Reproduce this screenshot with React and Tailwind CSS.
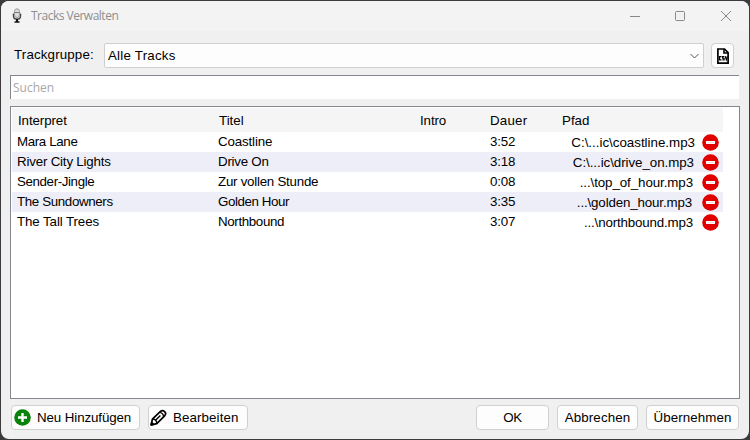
const tracks = [
  { artist: "Mara Lane", artistFit: "tracking-[-0.36px]", title: "Coastline", titleFit: "tracking-[-0.15px]", time: "3:52", path: "C:\\...ic\\coastline.mp3", pathFit: "pr-[7px]" },
  { artist: "River City Lights", artistFit: "tracking-[-0.19px]", title: "Drive On", titleFit: "tracking-[-0.25px]", time: "3:18", path: "C:\\...ic\\drive_on.mp3", pathFit: "pr-[8px] tracking-[-0.05px]" },
  { artist: "Sender-Jingle", artistFit: "tracking-[-0.38px]", title: "Zur vollen Stunde", titleFit: "tracking-[-0.25px]", time: "0:08", path: "...\\top_of_hour.mp3", pathFit: "pr-[9px] tracking-[-0.08px]" },
  { artist: "The Sundowners", artistFit: "tracking-[-0.36px]", title: "Golden Hour", titleFit: "tracking-[-0.42px]", time: "3:35", path: "...\\golden_hour.mp3", pathFit: "pr-[10px] tracking-[-0.14px]" },
  { artist: "The Tall Trees", artistFit: "tracking-[-0.1px]", title: "Northbound", titleFit: "tracking-[-0.36px]", time: "3:07", path: "...\\northbound.mp3", pathFit: "pr-[9px] tracking-[-0.16px]" },
];

const buttonStyle = "flex h-[25px] items-center rounded-[4px] border border-[#d0d0d0] bg-[#fdfdfd]";

function MicIcon() {
  return (
    <svg width="10" height="16" viewBox="0 0 10 16" fill="none">
      <path d="M1.5 5.5v2.4c0 4.3 7 4.3 7 0V5.5" stroke="#444" strokeWidth="1.4" />
      <rect x="2.5" y="0.8" width="5" height="8.7" rx="2.5" fill="#dcdcdc" stroke="#9a9a9a" />
      <path d="M2.5 4.5h5" stroke="#777" />
      <path d="M5 11v3" stroke="#111" strokeWidth="2" />
      <path d="M2.5 14h5" stroke="#111" strokeWidth="1.6" />
    </svg>
  );
}

function CsvIcon() {
  return (
    <svg width="12" height="16" viewBox="0 0 12 16" fill="none">
      <path d="M.9 1h6.6l3.6 3.6v10.5H.9z" stroke="#000" strokeWidth="1.7" />
      <path d="M7 1v4h4" stroke="#000" strokeWidth="1.6" />
      <path d="M4.5 8.6H2.6v3.2h1.9M7.2 8.6H5.6v1.6h1.5v1.6H5.4M8.2 8.2l1.1 3.6 1.1-3.6" stroke="#000" strokeWidth="1.15" />
    </svg>
  );
}

function RemoveIcon() {
  return (
    <svg width="17" height="17" viewBox="0 0 17 17">
      <circle cx="8.5" cy="8.5" r="8.3" fill="#e00000" />
      <rect x="4" y="7" width="9" height="3" rx=".4" fill="#fff" />
      <path d="M5 8.5h7" stroke="#fbdada" strokeWidth="1" />
    </svg>
  );
}

function PencilIcon() {
  return (
    <svg width="17" height="17" viewBox="0 0 17 17" fill="none" stroke="#000" strokeWidth="1.7" strokeLinejoin="round">
      <path d="M1.2 15.8l1.2-5.6 7.8-7.6c3-2.8 7.2 1.2 4.4 4.2l-7.8 7.8z" />
      <path d="M2.8 10c2.4.2 3.8 1.8 4 4.2M9.4 3.4c2.3.2 3.9 1.8 4.2 4.2M6 10.8l4.4-4.4" strokeWidth="1.4" />
      <path d="M1.2 15.8l.5-2.2 1.7 1.7z" fill="#000" />
    </svg>
  );
}

export default function App() {
  return (
    <div className="h-[440px] w-[750px] overflow-hidden bg-[#3b3a3c] p-px font-['Liberation_Sans',Arial,sans-serif] text-[13.33px] leading-[20px] text-black">
      <div className="flex h-[438px] flex-col overflow-hidden rounded-[8px] bg-[#f0f0f0]">
        <header className="flex h-[30px] shrink-0 items-center bg-[#f3f3f3] pl-[11px]">
          <MicIcon />
          <h1 className="ml-[9px] font-['Open_Sans','Noto_Sans',sans-serif] text-[12px] tracking-[-0.5px] text-[#8e8e8e]">Tracks Verwalten</h1>
          <svg className="ml-auto mr-[16px]" width="104" height="12" viewBox="0 0 104 12" fill="none" stroke="#888">
            <path d="M1 6.5h10" />
            <rect x="46.5" y="1.5" width="9" height="9" rx="1" />
            <path d="M92 1l10 10M102 1L92 11" />
          </svg>
        </header>

        <div className="mt-[12px] flex h-[25px] shrink-0 items-center pl-[13px]">
          <span className="w-[90px] -translate-y-px tracking-[0.15px]">Trackgruppe:</span>
          <div className="flex h-[25px] w-[600px] items-center justify-between rounded-[2px] border border-[#cfcfcf] bg-[#fdfdfd] pl-[3px] pr-[4px]">
            <span className="tracking-[0.22px]">Alle Tracks</span>
            <svg width="9" height="6" viewBox="0 0 9 6" fill="none" stroke="#555"><path d="M.5 1l4 4 4-4" /></svg>
          </div>
          <button className={`${buttonStyle} ml-[7px] w-[23px] justify-center`}><CsvIcon /></button>
        </div>

        <div className="ml-[9px] mt-[7px] flex h-[24px] w-[729px] shrink-0 items-center border-l border-t border-[#828790] bg-white pl-[2px] font-['Open_Sans','Noto_Sans',sans-serif] text-[12px] text-[#a8a8a8]">Suchen</div>

        <main className="ml-[9px] mt-[7px] h-[293px] w-[730px] shrink-0 border border-[#828790] bg-white pl-px pt-px">
          <div className="flex h-[24px] w-[711px] items-center bg-[#f5f5f5] pl-[6px] pt-px">
            <span className="w-[201px] tracking-[-0.1px]">Interpret</span>
            <span className="w-[201px]">Titel</span>
            <span className="w-[70px] tracking-[-0.1px]">Intro</span>
            <span className="w-[72px] tracking-[0.2px]">Dauer</span>
            <span>Pfad</span>
          </div>
          {tracks.map((t) => (
            <div key={t.artist} className="flex h-[20px] w-[711px] items-center pl-[5px] even:bg-white odd:bg-[#eeeef8]">
              <span className={`w-[201px] ${t.artistFit}`}>{t.artist}</span>
              <span className={`w-[272px] ${t.titleFit}`}>{t.title}</span>
              <span className="w-[60px] tracking-[-0.2px]">{t.time}</span>
              <span className={`w-[152px] pt-[2px] text-right ${t.pathFit}`}>{t.path}</span>
              <RemoveIcon />
            </div>
          ))}
        </main>

        <footer className="ml-[10px] mt-[6px] flex shrink-0">
          <button className={`${buttonStyle} w-[129px] pl-[2px]`}>
            <svg className="mb-px" width="17" height="17" viewBox="0 0 17 17"><circle cx="8.5" cy="8.5" r="8.3" fill="#098209" /><path d="M8.5 4v9M4 8.5h9" stroke="#fff" strokeWidth="2.4" /></svg>
            <span className="ml-[6px] tracking-[-0.1px]">Neu Hinzufügen</span>
          </button>
          <button className={`${buttonStyle} ml-[8px] w-[100px] pl-[1px]`}>
            <PencilIcon />
            <span className="ml-[6px] tracking-[0.1px]">Bearbeiten</span>
          </button>
          <button className={`${buttonStyle} ml-[228px] w-[73px] justify-center tracking-[-0.4px]`}>OK</button>
          <button className={`${buttonStyle} ml-[8px] w-[81px] justify-center tracking-[0.1px]`}>Abbrechen</button>
          <button className={`${buttonStyle} ml-[8px] w-[93px] justify-center tracking-[0.1px]`}>Übernehmen</button>
        </footer>
      </div>
    </div>
  );
}
